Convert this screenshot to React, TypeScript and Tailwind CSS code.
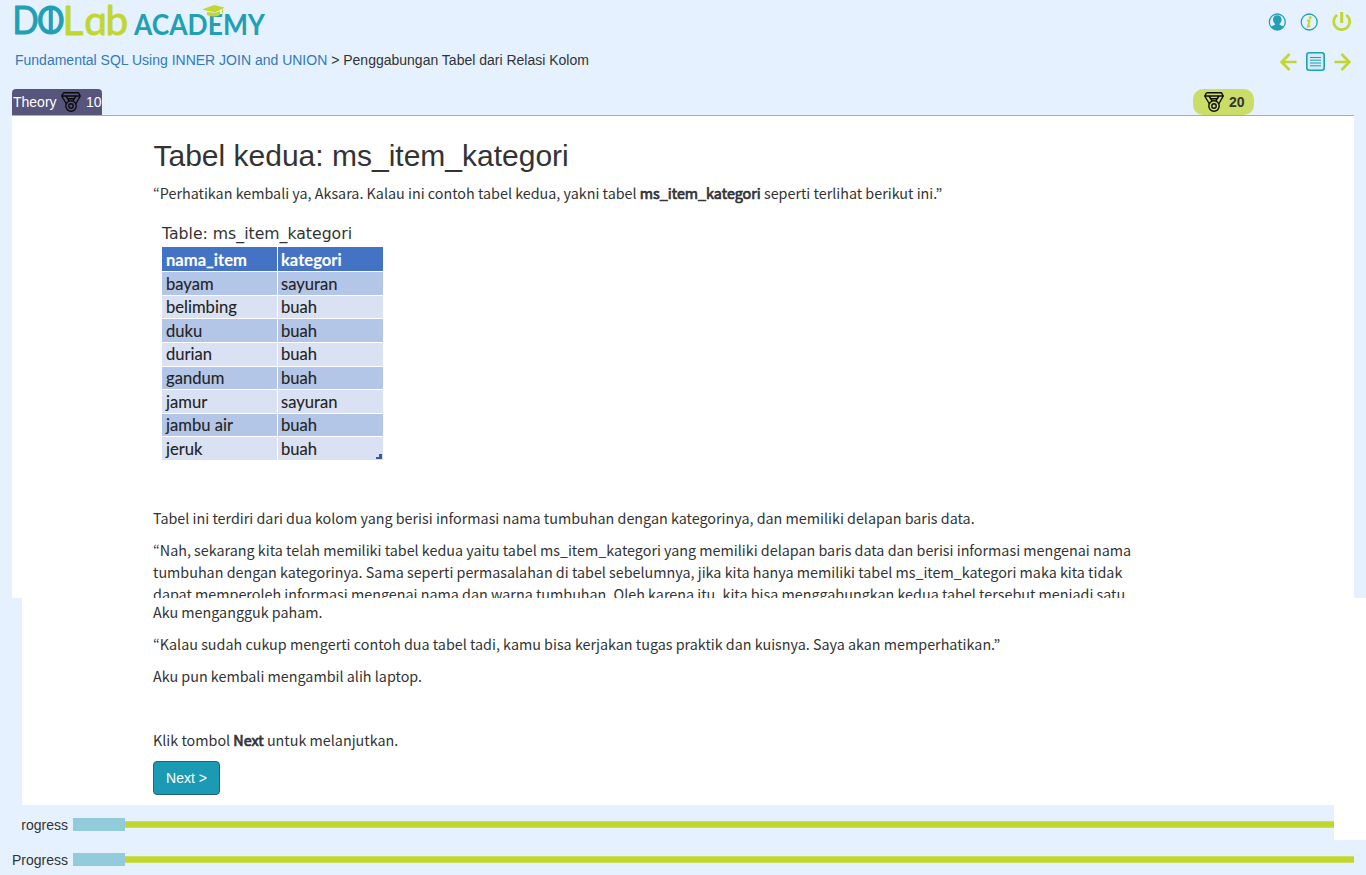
import type { ReactNode } from "react";

const rows: [string, string][] = [
  ["bayam", "sayuran"],
  ["belimbing", "buah"],
  ["duku", "buah"],
  ["durian", "buah"],
  ["gandum", "buah"],
  ["jamur", "sayuran"],
  ["jambu air", "buah"],
  ["jeruk", "buah"],
];

function Logo() {
  return (
    <svg className="block h-[40px] w-[256px] overflow-visible" viewBox="0 0 256 40" fontFamily="Lato, sans-serif" strokeLinejoin="round">
      <g fill="#209fb5" stroke="#209fb5" strokeWidth="0.9" fontSize="39">
        <text x="-2.700" y="34.300" textLength="26.500" lengthAdjust="spacingAndGlyphs">D</text>
        <text x="21.700" y="34.300" textLength="28" lengthAdjust="spacingAndGlyphs">O</text>
        <path d="M35.800 7V34" strokeWidth="4" />
      </g>
      <text x="47.500 69.300 90.500" y="34.700" fontSize="40.500" fill="#c1d72f" stroke="#c1d72f" strokeWidth="0.9">Lɑb</text>
      <text x="119" y="34.700" fontSize="28" fontWeight="700" textLength="131" lengthAdjust="spacingAndGlyphs" fill="#209fb5">ACADEMY</text>
      <path d="M187 9.500 199 5l10.500 2.500-9.500 5z" fill="#c1d72f" />
      <path d="M192 12v3q7 3 13 0v-4l-5 2z" fill="#c1d72f" />
      <path d="M207.500 8.500v5" stroke="#c1d72f" strokeWidth="1" />
    </svg>
  );
}

function Medal() {
  return (
    <svg className="h-5 w-5 shrink-0" viewBox="0 0 20 20" fill="none" stroke="#0b0b0b" strokeWidth="1.400" strokeLinejoin="round">
      <path d="M2.500.8h15L19.300 4l-4.600 8M2.500.8.7 4l4.800 8M.9 4h18.300M5 4l3.200 5M15 4l-3.200 5M6.600 6.700h6.800" />
      <circle cx="10" cy="14" r="5.200" />
      <circle cx="10" cy="14" r="2.200" />
    </svg>
  );
}

function UserIcon() {
  return (
    <svg className="h-[18px] w-[18px]" viewBox="0 0 18 18">
      <circle cx="9.300" cy="9" r="8" fill="none" stroke="#209fb5" strokeWidth="1.300" />
      <path d="M9.300 2.200c2.700 0 4.300 1.800 4.300 4.200 0 1.900-.8 3.400-2 4.300v1l4 1.900A8 8 0 0 1 9.300 17 8 8 0 0 1 3 13.600l4-1.900v-1C5.800 9.800 5 8.300 5 6.400c0-2.400 1.600-4.200 4.300-4.200z" fill="#209fb5" />
    </svg>
  );
}

function InfoIcon() {
  return (
    <svg className="h-[18px] w-[18px]" viewBox="0 0 18 18">
      <circle cx="9.200" cy="9" r="8" fill="none" stroke="#209fb5" strokeWidth="1.300" />
      <path d="M6.900 7.600h2.600l-1.500 6 2.200-.8" fill="none" stroke="#c1d72f" strokeWidth="2" />
      <circle cx="10.200" cy="4.500" r="1.500" fill="#c1d72f" />
    </svg>
  );
}

function PowerIcon() {
  return (
    <svg className="h-[19px] w-[19px]" viewBox="0 0 19 19" fill="none" stroke="#c1d72f" strokeWidth="2.700">
      <path d="M9.700 0v11" strokeWidth="3" />
      <path d="M5.200 3A8 8 0 1 0 14.200 3" />
    </svg>
  );
}

function Arrow({ flip = false }: { flip?: boolean }) {
  return (
    <svg className={flip ? "h-[18px] w-[17px] -scale-x-100" : "h-[18px] w-[17px]"} viewBox="0 0 17 18" fill="none" stroke="#c1d72f" strokeWidth="2.700">
      <path d="M16.500 9H2M9.500 1 1.700 9l7.800 8" />
    </svg>
  );
}

function ListIcon() {
  return (
    <svg className="h-[19px] w-[19px]" viewBox="0 0 19 19" fill="none" stroke="#209fb5">
      <rect x=".8" y=".8" width="17.400" height="17.400" rx="2.400" fill="#d2ebf5" strokeWidth="1.600" />
      <path d="M4 5.500h11M4 8.200h11M4 11h11M4 13.800h11" strokeWidth="1" />
    </svg>
  );
}

function P({ children }: { children: ReactNode }) {
  return <p className="mb-[10px] min-h-[22px] whitespace-nowrap">{children}</p>;
}

function B({ children }: { children: ReactNode }) {
  return <strong className="font-normal [-webkit-text-stroke:0.7px_#333]">{children}</strong>;
}

function Bar() {
  return (
    <>
      <div className="h-[13px] w-[52px] bg-[#92cbdc]" />
      <div className="h-[7px] flex-1 border-y border-[#cbdd59] bg-[#c1d72f]" />
    </>
  );
}

export default function App() {
  return (
    <div className="flex h-[875px] w-[1366px] flex-col overflow-hidden bg-[#e5f1ff] font-['Liberation_Sans',Arial,sans-serif] text-sm leading-5 text-[#333]">
      <header className="h-[89px] shrink-0 px-[15px]">
        <div className="flex h-[42px] items-start justify-between">
          <Logo />
          <div className="flex items-center gap-[14px] pt-[12px]">
            <UserIcon />
            <InfoIcon />
            <PowerIcon />
          </div>
        </div>
        <div className="flex h-9 items-start justify-between pt-2">
          <nav className="whitespace-nowrap">
            <a className="text-[#337ab7]">Fundamental SQL Using INNER JOIN and UNION</a>
            {" > Penggabungan Tabel dari Relasi Kolom"}
          </nav>
          <div className="flex items-center gap-[9px] pt-[2px]">
            <Arrow />
            <ListIcon />
            <Arrow flip />
          </div>
        </div>
      </header>

      <div className="mx-3 flex h-[27px] shrink-0 items-start justify-between border-b border-[#a5aac6] pr-[100px]">
        <div className="flex h-[26px] w-[90px] items-center overflow-hidden rounded-t bg-[#57557c] pl-px whitespace-nowrap text-white">
          <span className="w-12">Theory</span>
          <Medal />
          <span className="pl-[5px]">10</span>
        </div>
        <div className="flex h-[26px] w-[61px] items-center gap-[5px] rounded-[10px] bg-[#cadd67] pl-[11px] font-bold">
          <Medal />
          <span>20</span>
        </div>
      </div>

      <main className="mx-3 h-[482px] shrink-0 overflow-hidden bg-white pl-[141px] font-['Noto_Sans_CJK_KR',sans-serif] text-[14.33px] leading-[22px]">
        <h1 className="mt-[23px] mb-[10px] pl-[0.5px] font-['Liberation_Sans',Arial,sans-serif] text-[30px] leading-[33px]">Tabel kedua: ms_item_kategori</h1>
        <P>
          “Perhatikan kembali ya, Aksara. Kalau ini contoh tabel kedua, yakni tabel <B>ms_item_kategori</B> seperti terlihat berikut ini.”
        </P>
        <div className="h-[293px] pt-[10px] pl-[9px]">
          <div className="mb-[3px] font-['DejaVu_Sans',sans-serif] text-[15.7px] leading-5 whitespace-nowrap">Table: ms_item_kategori</div>
          <div className="relative w-[221px] font-['Lato',sans-serif] text-[16.6px] leading-[22px] text-[#222] [-webkit-text-stroke:0.1px_currentColor]">
            <div className="mb-[2px] grid h-[23px] grid-cols-[115px_105px] items-stretch gap-px font-bold text-white">
              <div className="bg-[#4472c4] pt-[2px] pl-1">nama_item</div>
              <div className="bg-[#4472c4] pt-[2px] pl-[3px]">kategori</div>
            </div>
            <div className="grid h-[188px] grid-cols-[115px_105px] grid-rows-8 gap-px">
              {rows.flatMap((row, i) =>
                row.map((cell, j) => (
                  <div key={`${i}-${j}`} className={`pt-[0.5px] ${i % 2 ? "bg-[#d9e1f2]" : "bg-[#b4c6e7]"} ${j ? "pl-[3px]" : "pl-1"}`}>
                    {cell}
                  </div>
                )),
              )}
            </div>
            <svg className="absolute right-[1px] bottom-[1px] h-[5px] w-[6px]" viewBox="0 0 6 5">
              <path d="M0 5V3h3V0h3v5z" fill="#3c53ad" />
            </svg>
          </div>
        </div>
        <P>Tabel ini terdiri dari dua kolom yang berisi informasi nama tumbuhan dengan kategorinya, dan memiliki delapan baris data.</P>
        <P>
          “Nah, sekarang kita telah memiliki tabel kedua yaitu tabel ms_item_kategori yang memiliki delapan baris data dan berisi informasi mengenai nama
          <br />
          tumbuhan dengan kategorinya. Sama seperti permasalahan di tabel sebelumnya, jika kita hanya memiliki tabel ms_item_kategori maka kita tidak
          <br />
          dapat memperoleh informasi mengenai nama dan warna tumbuhan. Oleh karena itu, kita bisa menggabungkan kedua tabel tersebut menjadi satu
        </P>
      </main>

      <section className="ml-[22px] h-[207px] shrink-0 bg-white pt-[3px] pl-[131px] font-['Noto_Sans_CJK_KR',sans-serif] text-[14.33px] leading-[22px]">
        <P>Aku mengangguk paham.</P>
        <P>“Kalau sudah cukup mengerti contoh dua tabel tadi, kamu bisa kerjakan tugas praktik dan kuisnya. Saya akan memperhatikan.”</P>
        <P>Aku pun kembali mengambil alih laptop.</P>
        <P> </P>
        <P>
          Klik tombol <B>Next</B> untuk melanjutkan.
        </P>
        <button className="block h-[34px] w-[67px] rounded border border-[#20618c] bg-[#1b9ab3] text-center font-['Liberation_Sans',Arial,sans-serif] text-sm leading-5 text-white">
          Next &gt;
        </button>
      </section>

      <div className="flex h-[35px] shrink-0">
        <div className="ml-[22px] flex min-w-0 flex-1 items-center pt-1">
          <div className="flex w-[51px] justify-end overflow-hidden pr-[5px]">rogress</div>
          <Bar />
        </div>
        <div className="w-8 bg-white" />
      </div>
      <div className="mx-3 flex h-[35px] shrink-0 items-center pt-1">
        <div className="w-[61px]">Progress</div>
        <Bar />
      </div>
    </div>
  );
}
